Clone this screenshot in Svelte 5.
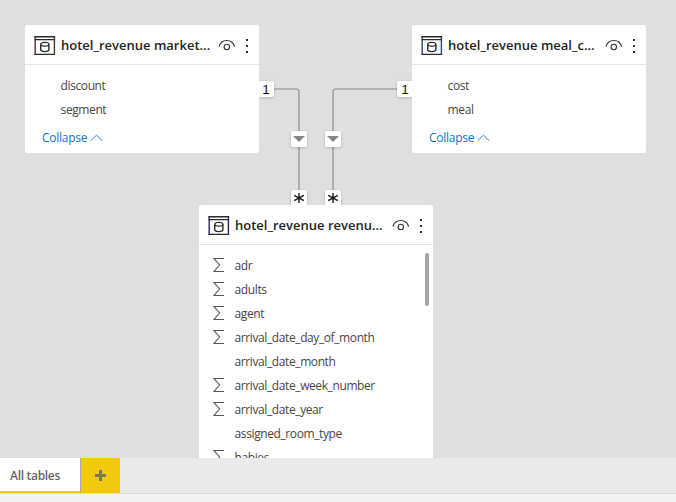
<script>
  const cards = [
    { title: 'hotel_revenue market...', left: 25, top: 25, edge: '#5a302c', fields: [{ name: 'discount' }, { name: 'segment' }], collapse: true },
    { title: 'hotel_revenue meal_c...', left: 412, top: 25, edge: '#2b4a78', fields: [{ name: 'cost' }, { name: 'meal' }], collapse: true },
    {
      title: 'hotel_revenue revenu...', left: 199, top: 205, edge: '#26265f', scroll: true,
      fields: [
        { name: 'adr', sum: true },
        { name: 'adults', sum: true },
        { name: 'agent', sum: true },
        { name: 'arrival_date_day_of_month', sum: true },
        { name: 'arrival_date_month' },
        { name: 'arrival_date_week_number', sum: true },
        { name: 'arrival_date_year', sum: true },
        { name: 'assigned_room_type' },
        { name: 'babies', sum: true }
      ]
    }
  ];
  const arrows = [291, 325];
</script>

<div class="app">
  <main class="canvas">
    <svg class="links" width="676" height="458" fill="none" stroke="#a6a6a6" stroke-width="1.7">
      <path d="M273 89H296Q299 89 299 92V192" />
      <path d="M398 89H336Q333 89 333 92V192" />
    </svg>
    <div class="mark one" style="left:258px;top:81px">1</div>
    <div class="mark one" style="left:397px;top:81px">1</div>
    {#each arrows as x}
      <div class="mark" style="left:{x}px;top:131px">
        <svg width="16" height="16"><path d="M2 5H14L8 11Z" fill="#858585" /></svg>
      </div>
      <div class="mark" style="left:{x}px;top:190px">
        <svg width="16" height="16" stroke="#1a1a1a" stroke-width="1.4"><path d="M8 3V13M3.2 5.3L12.8 10.7M12.8 5.3L3.2 10.7" /></svg>
      </div>
    {/each}

    {#each cards as card}
      <section class="card" style="left:{card.left}px;top:{card.top}px">
        <header>
          <svg class="table" width="22" height="21" fill="none">
            <path d="M1.2 1V20M20.4 1V20" stroke={card.edge} stroke-width="1.4" />
            <path d="M.5 1.7H21.1M.5 4.6H21.1M.5 19.4H21.1" stroke="#2b2b2b" stroke-width="1.4" />
            <path d="M6.7 9.2V14.6C6.7 17.3 14.9 17.3 14.9 14.6V9.2" stroke="#2b2b2b" stroke-width="1.4" />
            <ellipse cx="10.8" cy="9.2" rx="4.1" ry="1.9" stroke="#2b2b2b" stroke-width="1.2" />
          </svg>
          <span class="title">{card.title}</span>
          <svg class="eye" width="18" height="13" fill="none" stroke="#333" stroke-width="1.1">
            <path d="M1 7.6C3.3 -.5 14.3 -.5 16.6 7.6" />
            <circle cx="8.8" cy="8" r="2.7" />
          </svg>
          <svg class="dots" width="2" height="14" fill="#333"><path d="M0 0H2V2H0ZM0 6H2V8H0ZM0 12H2V14H0Z" /></svg>
        </header>
        <ul>
          {#each card.fields as field}
            <li>
              <span class="sigma">
                {#if field.sum}
                  <svg width="12" height="15" fill="none" stroke="#555" stroke-width="1.05"><path d="M11 .5H1L6.6 7L1 13.5H11" /></svg>
                {/if}
              </span>
              <span class="name">{field.name}</span>
            </li>
          {/each}
        </ul>
        {#if card.collapse}
          <div class="collapse">
            <span>Collapse</span>
            <svg width="13" height="8" fill="none" stroke="#2b7cd3"><path d="M.7 6.8L6.5 1.2L12.3 6.8" /></svg>
          </div>
        {/if}
        {#if card.scroll}<i class="scrollbar"></i>{/if}
      </section>
    {/each}
  </main>
  <nav>
    <button class="tab">All tables</button>
    <button class="add" aria-label="New layout">
      <svg width="11" height="11"><path d="M4 0H7V4H11V7H7V11H4V7H0V4H4Z" fill="#7b7768" /></svg>
    </button>
  </nav>
</div>

<style>
  .app {
    width: 676px;
    height: 502px;
    display: flex;
    flex-direction: column;
    overflow: hidden;
    background: #f3f2f1;
    font: 12px 'Open Sans', 'Noto Sans', sans-serif;
    color: #484644;
  }
  .canvas {
    position: relative;
    height: 458px;
    flex: none;
    overflow: hidden;
    background: #e0dfdd;
  }
  svg { display: block; flex: none; }
  .links { position: absolute; left: 0; top: 0; }
  .mark {
    position: absolute;
    width: 16px;
    height: 16px;
    background: #fff;
    border-radius: 2px;
    box-shadow: 0 1px 3px rgba(0, 0, 0, 0.2);
  }
  .one {
    font: 13.5px/17px 'Liberation Sans', sans-serif;
    color: #111;
    text-align: center;
  }
  .card {
    position: absolute;
    width: 234px;
    background: #fff;
    border-radius: 2px;
  }
  header {
    display: flex;
    height: 39px;
    border-bottom: 1px solid #e6e5e4;
  }
  .table { margin: 10px 5px 0 9px; }
  .title {
    width: 151px;
    font-weight: 600;
    font-size: 13px;
    line-height: 40px;
    color: #252423;
    white-space: nowrap;
  }
  .eye { margin: 14px 0 0 6px; }
  .dots { margin: 14px 0 0 10px; }
  ul { list-style: none; margin: 0; padding: 9px 0 0 14px; }
  li { display: flex; align-items: center; height: 24px; }
  .sigma { width: 21.6px; flex: none; }
  .sigma svg { margin-top: -1px; }
  .name { white-space: nowrap; letter-spacing: -0.4px; padding-bottom: 1px; }
  .collapse {
    display: flex;
    align-items: center;
    gap: 3px;
    height: 31px;
    padding-left: 17px;
    color: #0f75cc;
  }
  .collapse span { letter-spacing: -0.25px; }
  .scrollbar {
    position: absolute;
    right: 4px;
    top: 48px;
    width: 4px;
    height: 53px;
    border-radius: 2px;
    background: #a6a6a6;
  }
  nav {
    display: flex;
    height: 35px;
    background: #eaeaea;
    border-bottom: 1px solid #dddcdb;
  }
  button { border: 0; padding: 0; font: inherit; }
  .tab {
    width: 81px;
    padding: 2px 0 0 10px;
    text-align: left;
    background: #fff;
    border-right: 1px solid #a8a8a8;
    border-bottom: 2px solid #f2c811;
    font-weight: 600;
    letter-spacing: -0.3px;
    color: #666;
  }
  .add {
    width: 39px;
    display: flex;
    align-items: center;
    justify-content: center;
    background: #f2c811;
  }
</style>
